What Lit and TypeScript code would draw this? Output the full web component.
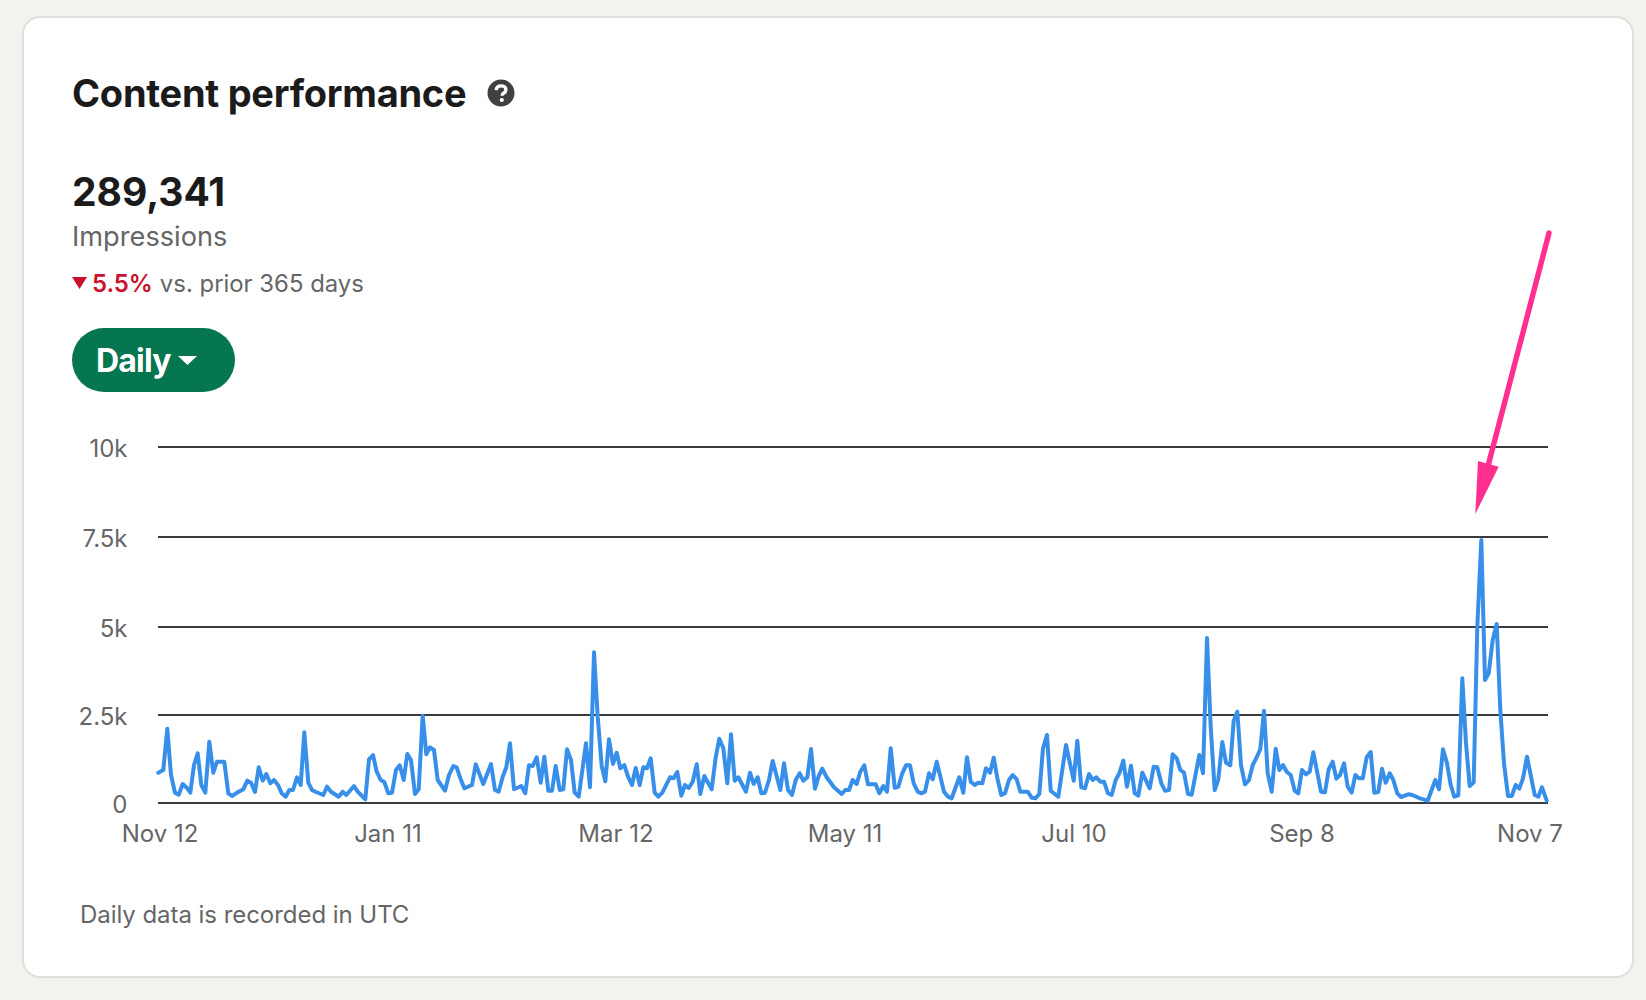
import { LitElement, html, css, svg } from "lit";
import { customElement } from "lit/decorators.js";

type P = [number, number];
const seg = (ox: number, oy: number, pts: number[]): P[] => {
  const out: P[] = [];
  for (let i = 0; i < pts.length; i += 2) out.push([ox + pts[i] / 3, oy + pts[i + 1] / 3]);
  return out;
};

const TRACE: P[] = [
  ...seg(60, 620, [295,458,310,450,322,326,333,465,345,518,356,524,368,492,380,503,391,518,402,435,413,400,424,495,436,518,448,365,460,458,471,425,493,425,505,520,516,528,528,520,550,508,562,482,573,488,585,516,596,442,608,482,619,462,631,490,642,480,654,495,665,520,677,530,688,510,699,510,711,472,722,495,733,337,745,488,756,510,768,516,790,525,801,500,813,515,836,530,848,515,859,525,882,498,893,515,916,538,927,418,939,405,950,455,962,480,973,486,985,520,996,518,1008,450,1019,436,1031,480,1042,402,1053,420,1065,522,1076,508,1088,287,1099,403,1110,382,1122,390,1133,480]),
  ...seg(440, 620, [15,512,27,465,40,438,50,442,62,478,73,505,96,495,107,433,130,492,153,432,165,510,176,515,188,470,199,442,210,370,222,508,244,498,256,520,267,436,278,438,290,412,302,488,313,410,325,512,336,512,347,438,359,510,370,508,381,388,393,420,404,518,416,530,438,370,450,502,462,97,473,290,485,438,496,484,507,358,519,432,530,398,541,445,553,435,564,470,576,495,587,444,599,495,610,442,621,445,632,415,644,518,655,530,667,518,690,472,701,475,712,456,724,527,735,495,746,504,758,485,770,433,781,522,793,468,815,508,827,412,838,356,850,385,862,490,873,343,884,482,895,472,918,515,930,458,941,492,953,472,964,520,975,518,987,480,998,423,1021,510,1032,430,1044,510,1056,525,1067,480,1079,460,1090,482,1102,472,1113,387,1125,506,1136,468]),
  ...seg(820, 620, [7,446,20,472,42,502,65,522,76,510,87,510,98,480,110,492,121,455,133,436,144,493,167,493,178,520,190,498,201,515,212,385,224,503,235,500,247,460,258,436,270,436,281,490,293,515,304,520,315,515,327,460,338,478,350,425,372,515,384,530,395,535,418,472,430,518,441,412,452,485,464,495,475,488,487,490,498,445,510,458,521,413,533,480,544,525,555,520,567,480,578,465,590,478,601,515,623,515,635,533,646,535,658,522,669,385,681,345,692,512,715,530,738,375,761,482,772,362,784,502,795,505,807,462,818,480,829,472,841,485,852,485,864,520,875,525,887,480,898,460,910,422,921,500,933,437,944,520,955,527,967,458,989,505,1001,440,1012,442,1024,490,1035,512,1047,510,1058,403,1070,415,1081,450,1092,458,1104,522,1115,524,1138,405]),
  ...seg(1200, 520, [9,760,21,354,32,620,44,810,55,778,67,666,78,728,91,736,101,602,112,575,123,735,135,793,147,780,158,735,170,712,181,688,192,572,203,760,215,815,227,686,238,750,249,735,260,755,272,765,284,812,295,820,306,750,318,763,329,755,340,697,363,815,375,817,386,748,398,725,409,776,420,765,432,730,443,800,455,818,466,765,477,775,488,775,500,712,512,696,523,818,535,816,546,746,557,788,569,760,580,780,592,820,603,831,625,823,637,825,660,835,683,842,706,780,717,808,729,688,741,730,752,795,763,830,775,826,787,475,798,670,809,798,821,787,832,320,844,60,855,480,866,460,878,360,890,312,901,570,912,730,924,828,935,828,947,795,958,806,969,775,981,710,1004,825,1015,830,1026,802,1040,842]),
];

const GRID = [
  { y: 447, label: "10k" },
  { y: 537, label: "7.5k" },
  { y: 627, label: "5k" },
  { y: 715, label: "2.5k" },
  { y: 803, label: "0" },
];
const TICKS: [number, string][] = [
  [160, "Nov 12"], [388, "Jan 11"], [616, "Mar 12"], [845, "May 11"],
  [1074, "Jul 10"], [1302, "Sep 8"], [1530, "Nov 7"],
];

@customElement("app-root")
export class AppRoot extends LitElement {
  static styles = css`
    :host { display: block; height: 1000px; background: #f3f2ef; box-sizing: border-box; padding: 16px 12px 0 22px; font-family: Inter, "Liberation Sans", sans-serif; overflow: hidden; }
    .card { position: relative; box-sizing: border-box; height: 962px; background: #fff; border: 2px solid #e0dfdc; border-radius: 18px; padding: 48px 48px 0 48px; }
    .head { display: flex; align-items: center; gap: 21px; height: 54px; }
    h1 { margin: 0; font-size: 38px; line-height: 54px; font-weight: 650; color: #1b1b1b; letter-spacing: -0.27px; }
    .help { width: 28px; height: 28px; display: block; }
    .value { margin-top: 47px; font-size: 39px; line-height: 50px; font-weight: 700; color: #1b1b1b; }
    .name { margin-top: 3px; font-size: 27.2px; line-height: 34px; color: #666; }
    .delta { display: flex; align-items: center; margin-top: 14px; height: 30px; font-size: 23.9px; color: #666; }
    .tri { width: 15px; height: 12px; margin-right: 5px; display: block; }
    .pct { color: #cb112d; font-weight: 600; margin-right: 7px; }
    .pill { display: inline-flex; align-items: center; gap: 7px; margin-top: 30px; height: 64px; width: 163px; box-sizing: border-box; padding-left: 24px; border: 0; border-radius: 32px; background: #057650; color: #fff; font: 700 32px Inter, "Liberation Sans", sans-serif; letter-spacing: -0.8px; }
    .caret { width: 19px; height: 9px; display: block; }
    .chart { display: block; margin-top: 38px; width: 1530px; height: 430px; }
    .lbl { font-size: 24px; fill: #666; }
    .foot { margin: 39px 0 0 8px; font-size: 24px; line-height: 32px; color: #666; letter-spacing: -0.05px; }
    .arrow { position: absolute; left: -24px; top: -18px; width: 1646px; height: 1000px; pointer-events: none; }
  `;

  render() {
    const d = TRACE.map((p) => `${p[0].toFixed(1)},${p[1].toFixed(1)}`).join(" ");
    return html`
      <div class="card">
        <div class="head">
          <h1>Content performance</h1>
          <svg class="help" viewBox="0 0 28 28">
            <circle cx="14" cy="14" r="13.5" fill="#404040"></circle>
            <path d="M9.200 11.200c.2-2.700 2.200-4.300 4.900-4.300s4.800 1.500 4.800 3.900c0 1.800-1 2.700-2.300 3.500-1.100.6-1.400 1.100-1.400 2v.5" fill="none" stroke="#fff" stroke-width="3.400"></path>
            <circle cx="14.800" cy="21" r="2.100" fill="#fff"></circle>
          </svg>
        </div>
        <div class="value">289,341</div>
        <div class="name">Impressions</div>
        <div class="delta">
          <svg class="tri" viewBox="0 0 15 12"><path d="M0 0h15L7.5 12z" fill="#cb112d"></path></svg>
          <span class="pct">5.5%</span><span>vs. prior 365 days</span>
        </div>
        <button class="pill">Daily<svg class="caret" viewBox="0 0 19 9"><path d="M0 0h19L9.500 9z" fill="#fff"></path></svg></button>
        <svg class="chart" viewBox="72 430 1530 430">
          ${GRID.map((g) => svg`
            <line x1="158" x2="1548" y1=${g.y} y2=${g.y} stroke="#3a3a3a" stroke-width="2"></line>
            <text class="lbl" x="127.500" y=${g.y + 10} text-anchor="end">${g.label}</text>`)}
          ${TICKS.map((t) => svg`<text class="lbl" x=${t[0]} y="842" text-anchor="middle">${t[1]}</text>`)}
          <polyline points=${d} fill="none" stroke="#378fe9" stroke-width="4" stroke-linejoin="round" stroke-linecap="round"></polyline>
        </svg>
        <div class="foot">Daily data is recorded in UTC</div>
        <svg class="arrow" viewBox="0 0 1646 1000">
          <line x1="1549" y1="233" x2="1488" y2="466" stroke="#ff2f92" stroke-width="5.4" stroke-linecap="round"></line>
          <path d="M1478 461L1498.700 466.700L1475.300 514z" fill="#ff2f92"></path>
        </svg>
      </div>
    `;
  }
}
